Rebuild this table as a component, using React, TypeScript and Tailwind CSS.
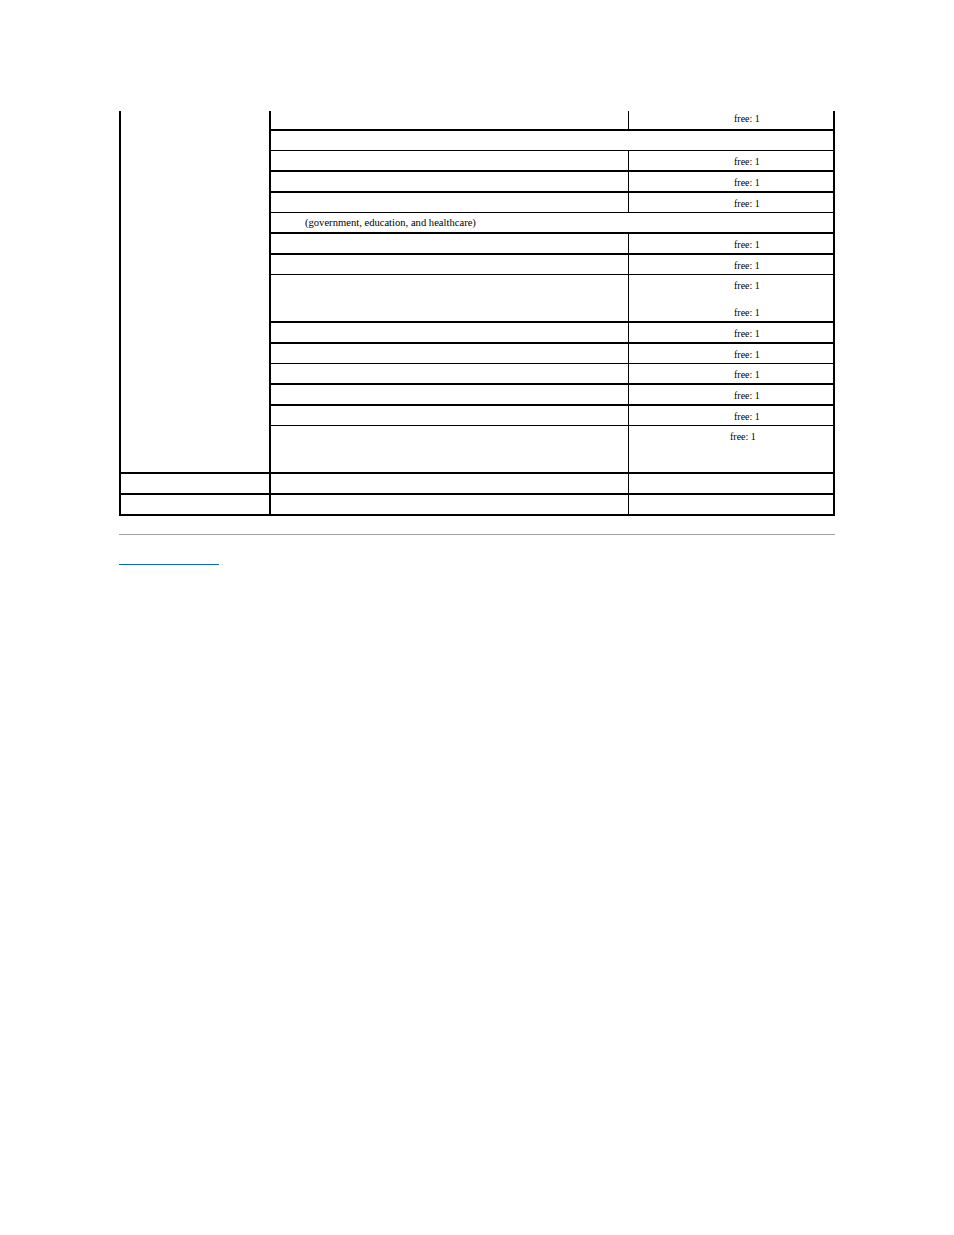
import React from "react"

type Row = {
  h: string
  top: string
  span?: boolean
  text?: string
  lines?: string[]
  pad?: string
}

// right-hand block of the table (next to the tall left cell)
const rows: Row[] = [
  { h: "h-[18px]", top: "", lines: ["free: 1"], pad: "pt-[2px] pl-[105px]" },
  { h: "h-[21px]", top: "border-t-2", span: true },
  { h: "h-[20px]", top: "border-t", lines: ["free: 1"] },
  { h: "h-[21px]", top: "border-t-2", lines: ["free: 1"] },
  { h: "h-[21px]", top: "border-t-2", lines: ["free: 1"] },
  { h: "h-[20px]", top: "border-t", span: true, text: "(government, education, and healthcare)" },
  { h: "h-[21px]", top: "border-t-2", lines: ["free: 1"] },
  { h: "h-[21px]", top: "border-t-2", lines: ["free: 1"] },
  { h: "h-[47px]", top: "border-t", lines: ["free: 1", "free: 1"] },
  { h: "h-[21px]", top: "border-t-2", lines: ["free: 1"] },
  { h: "h-[21px]", top: "border-t-2", lines: ["free: 1"] },
  { h: "h-[20px]", top: "border-t", lines: ["free: 1"] },
  { h: "h-[21px]", top: "border-t-2", lines: ["free: 1"] },
  { h: "h-[21px]", top: "border-t-2", lines: ["free: 1"] },
  { h: "h-[47px]", top: "border-t", lines: ["free: 1"], pad: "pt-[5px] pl-[101px]" },
]

function App() {
  return (
    <div
      className="min-h-[1235px] bg-white pt-[111px] text-[10px] leading-[12px] text-black"
      style={{ fontFamily: '"Liberation Serif", "Times New Roman", serif' }}
    >
      <div className="ml-[119px] w-[716px] border-x-2 border-b-2 border-black">
        <div className="flex">
          <div className="w-[150px] shrink-0 border-r-2 border-black" />
          <div className="flex-1">
            {rows.map((row, i) => (
              <div key={i} className={`flex border-black ${row.h} ${row.top}`}>
                {row.span ? (
                  <div className="flex-1 pt-[4px] pl-[34px] text-[10.6px]">{row.text}</div>
                ) : (
                  <>
                    <div className="w-[357px] shrink-0" />
                    <div
                      className={`flex flex-1 flex-col gap-[15px] border-l border-black ${
                        row.pad ?? "pt-[5px] pl-[105px]"
                      }`}
                    >
                      {row.lines?.map((t, j) => (
                        <span key={j}>{t}</span>
                      ))}
                    </div>
                  </>
                )}
              </div>
            ))}
          </div>
        </div>
        {/* last two empty rows span all three columns */}
        {[0, 1].map((k) => (
          <div key={k} className="flex h-[21px] border-t-2 border-black">
            <div className="w-[150px] shrink-0 border-r-2 border-black" />
            <div className="w-[357px] shrink-0" />
            <div className="flex-1 border-l border-black" />
          </div>
        ))}
      </div>

      <div className="mt-[18px] ml-[119px] h-px w-[716px] bg-[#a0a0a0]" />

      <div className="mt-[29px] ml-[119px]">
        <a href="#" className="block h-px w-[100px] bg-[#0a66cc]" aria-label="back to top" />
      </div>
    </div>
  )
}

export default App
